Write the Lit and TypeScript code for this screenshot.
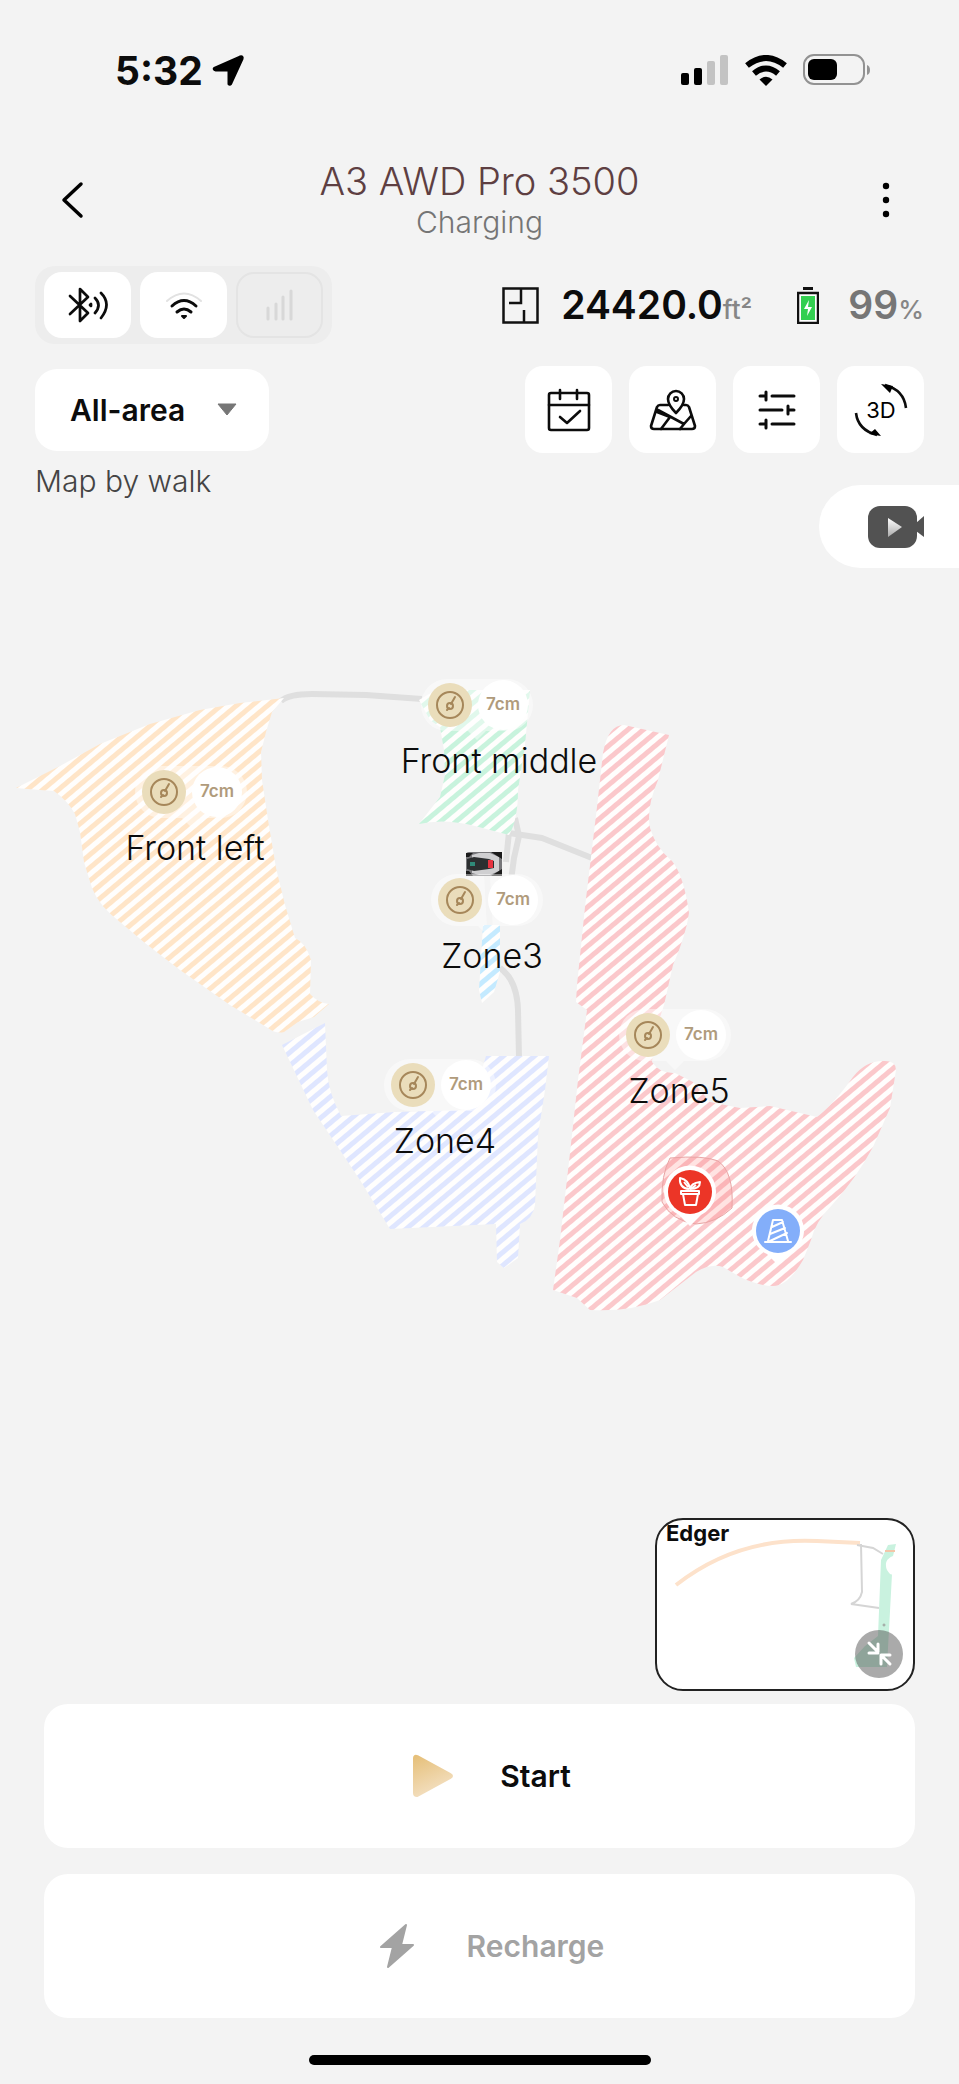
import { LitElement, html, svg, css } from "lit";
import { customElement, state } from "lit/decorators.js";

interface ZoneLabel {
  name: string;
  x: number;
  y: number;
  nameX: number;
}

const ZONES: ZoneLabel[] = [
  { name: "Front left", x: 164, y: 792, nameX: 195 },
  { name: "Front middle", x: 450, y: 705, nameX: 499 },
  { name: "Zone3", x: 460, y: 900, nameX: 492 },
  { name: "Zone4", x: 413, y: 1085, nameX: 445 },
  { name: "Zone5", x: 648, y: 1035, nameX: 679 },
];

const STRIPES = [
  { id: "orange", color: "#ffe5c8" },
  { id: "green", color: "#c8f3dd" },
  { id: "red", color: "#fbc8cb" },
  { id: "blue", color: "#dfe6ff" },
  { id: "cyan", color: "#c4eaff" },
];

@customElement("mower-map")
export class MowerMap extends LitElement {
  static styles = css`
    :host {
      display: block;
    }
    .canvas {
      display: block;
      width: 100%;
      height: auto;
    }
    .zone-name {
      font: 350 34px Inter, sans-serif;
      fill: #0c0c0c;
      text-anchor: middle;
    }
    .height {
      font: 600 17px Inter, sans-serif;
      fill: #b09b7c;
      text-anchor: middle;
    }
  `;

  private label(z: ZoneLabel) {
    return svg`
      <g transform="translate(${z.x} ${z.y})">
        <path d="M-3-26H57a26 26 0 0 1 0 52H36L27 35 18 26H-3a26 26 0 0 1 0-52Z" fill="#fff" fill-opacity=".45" />
        <circle r="22" fill="#eaddbb" />
        <circle r="13" fill="none" stroke="#a6875a" stroke-width="2" />
        <circle cy="1" r="3" fill="none" stroke="#a6875a" stroke-width="2" />
        <path d="M1-1 5-8M-3 5l2-2" stroke="#a6875a" stroke-width="2" stroke-linecap="round" />
        <circle cx="53" r="25" fill="#fff" />
        <text class="height" x="53" y="5">7cm</text>
      </g>
      <text class="zone-name" x=${z.nameX} y=${z.y + 68}>${z.name}</text>
    `;
  }

  render() {
    return html`
      <svg class="canvas" viewBox="0 568 959 950" role="img" aria-label="Mowing zones">
        <defs>
          ${STRIPES.map(
            (s) => svg`
              <pattern id=${s.id} width="20" height="10" patternUnits="userSpaceOnUse" patternTransform="rotate(-40)">
                <rect width="20" height="10" fill="#fffefd" />
                <rect width="20" height="5" fill=${s.color} />
              </pattern>`
          )}
        </defs>
        <g fill="none" stroke="#dfdfdf" stroke-width="6" stroke-linecap="butt" stroke-linejoin="round">
          <path d="M281 701Q289 694 312 694L366 695 422 699" />
          <path d="M509 833 542 838 592 858" />
          <path d="M515 818 519 836 514 858 510 888" />
          <path d="M509 832 506 862" />
          <path d="M487 874 490 930" stroke="#ebebeb" />
          <path d="M500 968Q517 980 518 1010L519 1058" />
        </g>
        <path fill="url(#orange)" d="M16 788 60 766 100 744 150 724 200 710 240 703 284 698 272 712 266 732 261 752 262 780 268 820 276 868 285 905 295 938 Q306 943 311 960L310 994 Q318 1003 329 1004L314 1017 298 1022 284 1032Q276 1034 268 1028L230 1005 180 970 145 943 120 922Q99 906 92 888L84 862 80 832 75 814Q68 801 54 791L40 790Z" />
        <path fill="url(#blue)" d="M282 1045 325 1023 327 1070Q328 1092 341 1116L395 1112 470 1110 486 1056H549L545 1090 538 1135 535 1205Q533 1219 520 1224L518 1258 504 1268 497 1262 496 1224 390 1229 360 1180 313 1110Z" />
        <path fill="url(#green)" d="M419 700 436 690 530 690 525 745 518 790Q518 820 509 835L475 826Q444 818 419 824L440 797 445 775 444 750 440 727 430 720Z" />
        <path fill="url(#cyan)" d="M483 925 500 925 500 972 494 992 482 1003 479 990Z" />
        <path fill="url(#red)" d="M603 753Q608 725 624 725L669 735 658 780Q646 808 650 828Q656 848 672 861Q684 876 689 913Q686 935 673 965L664 1005 656 1030 652 1062Q660 1074 675 1073L693 1082 710 1102 740 1108 770 1106 817 1117Q833 1105 853 1077Q866 1060 885 1061 896 1061 896 1070L890 1108 873 1147Q855 1180 832 1205 815 1222 811 1240L803 1260Q788 1286 773 1286 760 1286 742 1278L723 1267Q711 1263 696 1272L660 1300Q630 1312 590 1310L577 1298 553 1290 560 1240 570 1153 578 1080 587 1010 576 1002 577 985 585 907 597 807Z" />
        <path d="M670 1158Q704 1155 718 1161 734 1172 732 1208 716 1223 696 1224 672 1221 662 1202 661 1175 670 1158Z" fill="#f55" fill-opacity=".16" stroke="#e9a5a5" stroke-width="1" />
        <g transform="translate(465 851)">
          <rect x="1" y="1" width="36" height="24" rx="3" fill="#77777a" />
          <path d="M7 4 14 2H25L34 6V20L25 24H14L7 22Z" fill="#cfcfd1" />
          <path d="M2 8 9 6 24 8 29 10v7L24 18 9 20 2 18Z" fill="#2c2f30" />
          <path d="M23 9h5v8h-5Z" fill="#e5323f" />
          <path d="M5 11h5v4H5Z" fill="#2f8a78" />
          <path d="M1 2H8L4 6H1ZM1 25H8L4 20H1ZM26 1H37V8ZM26 25H37V18Z" fill="#1b1b1b" />
        </g>
        ${ZONES.map((z) => this.label(z))}
        <g transform="translate(690 1192)">
          <path d="M0 34-11 23A26 26 0 1 1 11 23Z" fill="#fff" />
          <circle r="22" fill="#ec3527" />
          <g fill="none" stroke="#fff" stroke-width="2" stroke-linejoin="round">
            <path d="M-9-1H9V2H-9ZM-7 2-5 13H6L8 2" />
            <path d="M-1-3Q-11-4-10-14-1-12 0-3 1-9 10-10 10-3 0-3M-2-5-6-10M2-4 6-7" />
          </g>
        </g>
        <g transform="translate(778 1231)">
          <path d="M0 34-11 23A26 26 0 1 1 11 23Z" fill="#fff" />
          <circle r="22" fill="#83aefa" />
          <path d="M-13 11H13M-10 10-5-11H4L10 10M-6-4 5-9M-8 3 7-3M-8 10 9 2" fill="none" stroke="#fff" stroke-width="2" stroke-linecap="round" stroke-linejoin="round" />
        </g>
      </svg>
    `;
  }
}

@customElement("app-root")
export class AppRoot extends LitElement {
  @state() private area = "All-area";

  static styles = css`
    :host {
      display: block;
      background: #f3f3f3;
      color: #0c0c0c;
      font-family: Inter, sans-serif;
    }
    button,
    select {
      font: inherit;
      color: inherit;
      border: 0;
      margin: 0;
      padding: 0;
      background: none;
      cursor: pointer;
    }
    svg {
      display: block;
      flex: none;
    }
    .status-bar {
      display: flex;
      align-items: center;
      justify-content: space-between;
      height: 140px;
      padding: 0 88px 0 115px;
    }
    .clock,
    .indicators {
      display: flex;
      align-items: center;
    }
    .clock {
      gap: 9px;
      font-size: 39px;
      font-weight: 700;
    }
    .indicators {
      gap: 16px;
    }
    .header {
      display: grid;
      grid-template-columns: 87px 1fr 87px;
      align-items: center;
      height: 120px;
      padding: 0 30px;
    }
    .nav {
      display: grid;
      place-items: center;
      height: 87px;
    }
    .titles {
      text-align: center;
    }
    .title {
      margin: 0;
      font-size: 38px;
      line-height: 44px;
      font-weight: 350;
      color: #5e3f42;
    }
    .subtitle {
      margin: 0;
      font-size: 30px;
      line-height: 38px;
      font-weight: 350;
      color: #757575;
    }
    .stats,
    .tools {
      display: flex;
      align-items: center;
      justify-content: space-between;
      padding: 0 35px;
    }
    .stats {
      margin-top: 6px;
    }
    .links {
      display: flex;
      gap: 9px;
      padding: 6px 9px;
      border-radius: 20px;
      background: #ededed;
    }
    .chip {
      display: grid;
      place-items: center;
      width: 87px;
      height: 66px;
      border-radius: 18px;
      background: #fff;
    }
    .chip.off {
      box-sizing: border-box;
      background: none;
      border: 2px solid #e4e4e4;
    }
    .readings,
    .reading {
      display: flex;
      align-items: center;
    }
    .readings {
      gap: 45px;
    }
    .reading {
      gap: 22px;
    }
    .reading.battery {
      gap: 29px;
    }
    .value {
      font-size: 39px;
      line-height: 44px;
      font-weight: 600;
    }
    .battery .value {
      color: #767676;
    }
    .unit {
      font-size: 26px;
      font-weight: 500;
      color: #868686;
    }
    .tools {
      margin-top: 22px;
    }
    .area {
      display: grid;
      grid-template-columns: 1fr auto;
      align-items: center;
      width: 234px;
      height: 82px;
      border-radius: 22px;
      background: #fff;
    }
    .area-select {
      grid-area: 1 / 1 / 2 / 3;
      appearance: none;
      height: 82px;
      padding: 0 66px 0 35px;
      border-radius: 22px;
      font-size: 30px;
      font-weight: 600;
    }
    .area-arrow {
      grid-area: 1 / 2;
      margin-right: 32px;
      pointer-events: none;
    }
    .tool-buttons {
      display: flex;
      gap: 17px;
    }
    .tool {
      display: grid;
      place-items: center;
      width: 87px;
      height: 87px;
      border-radius: 18px;
      background: #fff;
    }
    .three-d {
      font: 400 22px Inter, sans-serif;
      text-anchor: middle;
    }
    .source {
      display: flex;
      align-items: flex-start;
      justify-content: space-between;
      padding-left: 35px;
    }
    .source-label {
      margin: 9px 0 0;
      font-size: 30px;
      line-height: 38px;
      font-weight: 350;
      color: #444;
    }
    .camera {
      display: flex;
      align-items: center;
      width: 140px;
      height: 83px;
      margin-top: 32px;
      padding-left: 48px;
      border-radius: 42px 0 0 42px;
      background: #fff;
      box-sizing: border-box;
    }
    .footer {
      display: flex;
      flex-direction: column;
      padding: 0 44px;
    }
    .edger {
      align-self: flex-end;
      display: grid;
      box-sizing: border-box;
      width: 260px;
      height: 173px;
      margin-bottom: 13px;
      overflow: hidden;
      border: 2px solid #222;
      border-radius: 28px;
      background: #fff;
    }
    .edger > * {
      grid-area: 1 / 1;
    }
    .edger-name {
      justify-self: start;
      align-self: start;
      padding: 0 9px;
      font-size: 22px;
      line-height: 26px;
      font-weight: 700;
    }
    .action {
      display: flex;
      align-items: center;
      justify-content: center;
      gap: 24px;
      height: 144px;
      border-radius: 24px;
      background: #fff;
      font-size: 30px;
      font-weight: 600;
    }
    .action + .action {
      margin-top: 26px;
    }
    .action:disabled {
      color: #a3a3a3;
    }
    .home {
      display: flex;
      justify-content: center;
      padding: 37px 0 19px;
    }
    .home-bar {
      width: 342px;
      height: 10px;
      border-radius: 5px;
      background: #000;
    }
  `;

  private onArea(e: Event) {
    this.area = (e.target as HTMLSelectElement).value;
  }

  render() {
    return html`
      <div class="status-bar">
        <div class="clock">
          <span>5:32</span>
          <svg width="33" height="33" viewBox="0 0 33 33">
            <path d="M3 14 28 3q3-1 2 2L19 29q-1 2-2 1V17q0-1-1-1H4q-3-1-1-2Z" stroke="#000" stroke-width="3" stroke-linejoin="round" />
          </svg>
        </div>
        <div class="indicators">
          <svg width="48" height="31" viewBox="0 0 48 31">
            <rect y="18" width="8" height="12" rx="2" />
            <rect x="13" y="13" width="8" height="17" rx="2" />
            <rect x="26" y="6" width="8" height="24" rx="2" fill="#c3c3c3" />
            <rect x="39" width="8" height="30" rx="2" fill="#c3c3c3" />
          </svg>
          <svg width="42" height="31" viewBox="0 0 42 31">
            <g fill="none" stroke="#000" stroke-width="6">
              <path d="M2 10.500Q21-4.500 40 10.500" />
              <path d="M9 18.500Q21 8.500 33 18.500" />
            </g>
            <path d="M14.500 24.500Q21 19 27.500 24.500L21 31Z" />
          </svg>
          <svg width="68" height="32" viewBox="0 0 68 32">
            <rect x="1" y="1" width="60" height="29" rx="10" fill="none" stroke="#929292" stroke-width="2" />
            <rect x="5" y="5" width="29" height="21" rx="6" />
            <path d="M64 11q3 1 3 5t-3 5Z" fill="#929292" />
          </svg>
        </div>
      </div>

      <header class="header">
        <button class="nav" aria-label="Back">
          <svg width="28" height="40" viewBox="0 0 28 40">
            <path d="M21 4 4 20 21 36" fill="none" stroke="#000" stroke-width="3.500" stroke-linecap="round" stroke-linejoin="round" />
          </svg>
        </button>
        <div class="titles">
          <h1 class="title">A3 AWD Pro 3500</h1>
          <p class="subtitle">Charging</p>
        </div>
        <button class="nav" aria-label="More">
          <svg width="10" height="40" viewBox="0 0 10 40">
            <circle cx="5" cy="6" r="3.200" />
            <circle cx="5" cy="20" r="3.200" />
            <circle cx="5" cy="34" r="3.200" />
          </svg>
        </button>
      </header>

      <section class="stats">
        <div class="links">
          <button class="chip" aria-label="Bluetooth">
            <svg width="40" height="36" viewBox="0 0 40 36" fill="none" stroke="#0c0c0c" stroke-width="2.700" stroke-linecap="round" stroke-linejoin="round">
              <path d="M2 9 20 26 12 34V2L20 10 2 27" />
              <path d="M27 11q7 7 0 15M33 6q11 11 0 25" />
              <path d="M23 17v2l-1-1Z" fill="#0c0c0c" />
            </svg>
          </button>
          <button class="chip" aria-label="Wi-Fi">
            <svg width="38" height="30" viewBox="0 0 38 30" fill="none" stroke="#0c0c0c" stroke-width="3" stroke-linecap="round">
              <path d="M2 11q17-15 34 0" stroke="#e2e2e2" stroke-width="2" />
              <path d="M7 16q12-11 24 0M12 22q7-6 14 0" />
              <path d="M17 26h4l-2 2Z" stroke-width="2" stroke-linejoin="round" />
            </svg>
          </button>
          <button class="chip off" aria-label="Cellular">
            <svg width="28" height="32" viewBox="0 0 28 32" stroke="#d8d8d8" stroke-width="3" stroke-linecap="round">
              <path d="M2 19v11M10 15v15M17 8v22M25 2v28" />
            </svg>
          </button>
        </div>
        <div class="readings">
          <div class="reading">
            <svg width="37" height="37" viewBox="0 0 37 37" fill="none" stroke="#111" stroke-width="2.500">
              <path d="M1.500 1.500H35.500V35.500H1.500ZM19 1V16H7M22 36V23" />
            </svg>
            <div><span class="value">24420.0</span><span class="unit">ft²</span></div>
          </div>
          <div class="reading battery">
            <svg width="22" height="37" viewBox="0 0 22 37">
              <rect x="6" width="10" height="3" fill="#111" />
              <rect x="1" y="6" width="20" height="30" fill="#fff" stroke="#111" stroke-width="2.500" />
              <rect x="4" y="9" width="14" height="24" fill="#33cf50" />
              <path d="M12 13 7 22h4l-1 7 5-9h-4Z" fill="#fff" />
            </svg>
            <div><span class="value">99</span><span class="unit">%</span></div>
          </div>
        </div>
      </section>

      <section class="tools">
        <div class="area">
          <select class="area-select" aria-label="Area" .value=${this.area} @change=${this.onArea}>
            <option>All-area</option>
            ${ZONES.map((z) => html`<option>${z.name}</option>`)}
          </select>
          <svg class="area-arrow" width="20" height="13" viewBox="0 0 20 13">
            <path d="M1 1H19L10 12Z" fill="#767676" stroke="#767676" stroke-linejoin="round" />
          </svg>
        </div>
        <div class="tool-buttons">
          <button class="tool" aria-label="Schedule">
            <svg width="44" height="44" viewBox="0 0 44 44" fill="none" stroke="#0c0c0c" stroke-width="2.600" stroke-linecap="round" stroke-linejoin="round">
              <rect x="2" y="5" width="40" height="37" rx="2" />
              <path d="M2 17H42M13 2V11M30 2V11M13 29 20 35 33 23" />
            </svg>
          </button>
          <button class="tool" aria-label="Map">
            <svg width="48" height="44" viewBox="-1 0 48 44" fill="none" stroke="#0c0c0c" stroke-width="2.600" stroke-linecap="round" stroke-linejoin="round">
              <path d="M18 17H10q-2 0-3 2L1 38q0 3 3 3H42q3 0 3-3L39 19q-1-2-3-2H34" />
              <path d="M26 25Q18 17 18 11a8 8 0 0 1 16 0Q34 17 26 25Z" />
              <circle cx="26" cy="11" r="2" stroke-width="2" />
              <path d="M8 22 34 36 30 41M34 36 41 28M7 24 20 29 11 41" />
            </svg>
          </button>
          <button class="tool" aria-label="Settings">
            <svg width="38" height="40" viewBox="0 0 38 40" fill="none" stroke="#0c0c0c" stroke-width="3" stroke-linecap="round">
              <path d="M2 6H7M8 2V10M14 6H36M2 20H24M30 16V24M31 20H36M2 34H7M8 30V38M14 34H36" />
            </svg>
          </button>
          <button class="tool" aria-label="3D view">
            <svg width="54" height="54" viewBox="0 0 54 54">
              <path d="M31 2Q50 7 52 25M23 52Q4 47 2 30" fill="none" stroke="#0c0c0c" stroke-width="2.600" />
              <path d="M27 1 39 3 36 10ZM27 53 15 51 21 46Z" />
              <text class="three-d" x="27" y="35">3D</text>
            </svg>
          </button>
        </div>
      </section>

      <section class="source">
        <p class="source-label">Map by walk</p>
        <button class="camera" aria-label="Live camera">
          <svg width="58" height="42" viewBox="0 0 58 42">
            <defs>
              <linearGradient id="lens" x1="0" y1="0" x2="0" y2="1">
                <stop offset="0" stop-color="#fff" />
                <stop offset="1" stop-color="#aaa" />
              </linearGradient>
            </defs>
            <rect x="1" width="49" height="42" rx="12" fill="#525252" />
            <path d="M49 17 57 10V31L49 25Z" fill="#525252" />
            <path d="M21 12 35 21 21 31Z" fill="url(#lens)" />
          </svg>
        </button>
      </section>

      <mower-map></mower-map>

      <footer class="footer">
        <button class="edger" aria-label="Edger map">
          <svg width="256" height="169" viewBox="0 12 256 169" fill="none">
            <path d="M19 77Q80 29 160 33L203 35" stroke="#fde2cb" stroke-width="4" />
            <path d="M200 37 216 40 226 46M204 36 205 84Q203 93 194 96L222 100" stroke="#d5d5d5" stroke-width="2" />
            <path d="M231 37 239 36 236 48Q226 52 230 62 234 68 235 66L230 159H199L197 150 208 138 221 128 224 52Z" fill="#c9f2df" />
            <path d="M228 43h10" stroke="#f3c6a8" stroke-width="2" />
            <circle cx="227" cy="117" r="1" stroke="#999" />
            <circle cx="222" cy="146" r="24" fill="#555" fill-opacity=".5" />
            <path d="M212 135 221 144M212 145H221V136M233 156 224 147M224 156V147H233" stroke="#fff" stroke-width="3" stroke-linecap="round" stroke-linejoin="round" />
          </svg>
          <span class="edger-name">Edger</span>
        </button>
        <button class="action">
          <svg width="88" height="48" viewBox="0 0 88 48">
            <defs>
              <linearGradient id="gold" x1="0" y1="0" x2=".4" y2="1">
                <stop offset="0" stop-color="#e6c07a" />
                <stop offset="1" stop-color="#f3dfc0" />
              </linearGradient>
            </defs>
            <path d="M29 5 62 23Q64 24 62 25L29 43Q27 43 27 41V6Q27 4 29 5Z" fill="url(#gold)" stroke="url(#gold)" stroke-width="4" stroke-linejoin="round" />
          </svg>
          <span>Start</span>
        </button>
        <button class="action" disabled>
          <svg width="88" height="48" viewBox="0 0 88 48">
            <path d="M51 3 26 25H38L33 45 58 23H46Z" fill="#a3a3a3" stroke="#a3a3a3" stroke-width="2" stroke-linejoin="round" />
          </svg>
          <span>Recharge</span>
        </button>
      </footer>
      <div class="home"><div class="home-bar"></div></div>
    `;
  }
}
